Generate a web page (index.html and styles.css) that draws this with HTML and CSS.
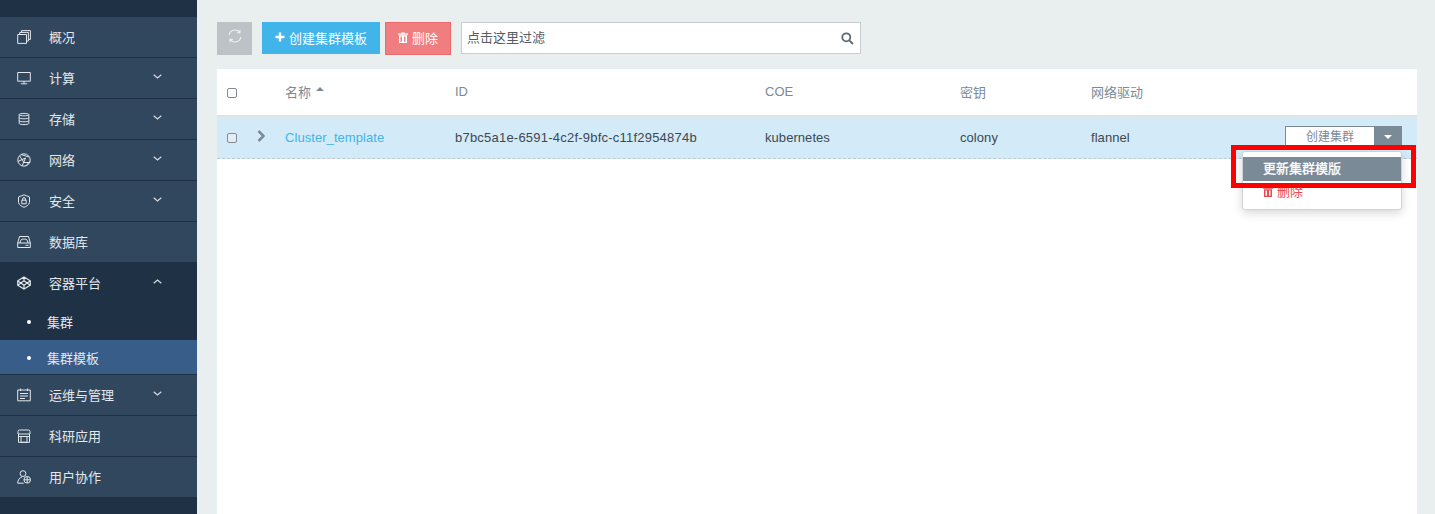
FILE: index.html
```html
<!DOCTYPE html>
<html lang="zh-CN">
<head>
<meta charset="utf-8">
<title>集群模板</title>
<link rel="stylesheet" href="styles.css">
</head>
<body>
<div class="app">
  <nav class="sidebar">
    <a class="nav-item"><svg class="nav-icon" viewBox="0 0 14 14"><path d="M4.500 3V.6h8.900v8.800H11M2.700 4.500V2.400h8.700v8.700H9.500M.7 4.500h8.800v8.900H.7z"/></svg><span class="nav-label">概况</span></a>
    <a class="nav-item"><svg class="nav-icon" viewBox="0 0 14 14"><path d="M.7 1.500h12.600v8.700H.7zM7 10.200v2.600M3.800 12.800h6.400"/></svg><span class="nav-label">计算</span><svg class="chev" viewBox="0 0 9 5"><path d="M.7.7 4.500 4 8.300.7"/></svg></a>
    <a class="nav-item"><svg class="nav-icon" viewBox="0 0 14 14"><path d="M2.200 2.600C2.200 1 11.800 1 11.800 2.600v8.800C11.800 13 2.200 13 2.200 11.400zM2.200 2.600C2.200 4.200 11.800 4.200 11.800 2.600M2.200 5.600C2.200 7.200 11.800 7.200 11.800 5.600M2.200 8.600C2.200 10.200 11.800 10.200 11.800 8.600"/></svg><span class="nav-label">存储</span><svg class="chev" viewBox="0 0 9 5"><path d="M.7.7 4.500 4 8.300.7"/></svg></a>
    <a class="nav-item"><svg class="nav-icon" viewBox="0 0 14 14"><circle cx="7" cy="7" r="6.200"/><path d="M2.500 2.800 7 9.500M.9 8.500 8.500 5M4 1.500 12 4M13 8.500 8.800 12.800M7 9.500h6M8.500 5 5 13"/></svg><span class="nav-label">网络</span><svg class="chev" viewBox="0 0 9 5"><path d="M.7.7 4.500 4 8.300.7"/></svg></a>
    <a class="nav-item"><svg class="nav-icon" viewBox="0 0 14 14"><path d="M7 .8 12.500 3v5.500C12 11 9 12.500 7 13.300 5 12.500 2 11 1.500 8.500V3zM4.800 6.200h4.400v3.600H4.800zM5.600 6.200V5a1.400 1.400 0 0 1 2.800 0v1.200"/></svg><span class="nav-label">安全</span><svg class="chev" viewBox="0 0 9 5"><path d="M.7.7 4.500 4 8.300.7"/></svg></a>
    <a class="nav-item"><svg class="nav-icon" viewBox="0 0 14 14"><path d="M2.500 1.500h9l1.800 6.500v4.500H.7V8zM.7 8h12.600M3 8c.5-3 1-4 4-4s3.500 1 4 4M8.500 10.300h3"/></svg><span class="nav-label">数据库</span></a>
    <div class="nav-group">
      <a class="nav-item nav-item-open"><svg class="nav-icon nav-icon-bold" viewBox="0 0 14 14"><path d="M7 1 13.300 4.800v4.400L7 13 .7 9.200V4.800zM7 4.800 10.200 7 7 9.200 3.800 7zM7 1v3.800M7 9.200V13M.7 4.800 3.800 7 .7 9.200M13.300 4.800 10.200 7l3.100 2.200"/></svg><span class="nav-label">容器平台</span><svg class="chev" viewBox="0 0 9 5"><path d="M.7 4.300 4.500 1l3.800 3.300"/></svg></a>
      <a class="sub-item"><span class="dot"></span>集群</a>
      <a class="sub-item sub-item-active"><span class="dot"></span>集群模板</a>
    </div>
    <a class="nav-item"><svg class="nav-icon" viewBox="0 0 14 14"><path d="M3.500.5v2.500M10.500.5v2.500M.7 2h12.600v10.800H.7zM3 5.500h8M3 8h8M3 10.500h5"/></svg><span class="nav-label">运维与管理</span><svg class="chev" viewBox="0 0 9 5"><path d="M.7.7 4.500 4 8.300.7"/></svg></a>
    <a class="nav-item"><svg class="nav-icon" viewBox="0 0 14 14"><path d="M1 5V2.500Q1 1 2.500 1h9Q13 1 13 2.500V5zM1.500 5v8.300h11V5M4 7.500h6v5.800H4zM1.500 7.500h11"/></svg><span class="nav-label">科研应用</span></a>
    <a class="nav-item"><svg class="nav-icon" viewBox="0 0 14 14"><circle cx="6" cy="3.600" r="2.900"/><path d="M5 7C2.500 7.500.7 10 .7 13.200h6"/><circle cx="10.200" cy="9.800" r="3.300"/><path d="M10.200 6.500v6.600M6.900 9.800h6.600"/></svg><span class="nav-label">用户协作</span></a>
  </nav>
  <main class="main">
    <div class="toolbar">
      <button class="btn btn-refresh" type="button"><svg class="refresh" viewBox="0 0 14 14"><path d="M1.200 6A5.800 5.800 0 0 1 11.500 3.200M12.800 8A5.800 5.800 0 0 1 2.500 10.800M12 .8v3H9M2 13.200v-3h3"/></svg></button>
      <button class="btn btn-create" type="button"><svg class="plus" viewBox="0 0 10 10"><path d="M5 .5v9M.5 5h9"/></svg>创建集群模板</button>
      <button class="btn btn-delete" type="button"><svg class="trash" viewBox="0 0 10 11"><path d="M3.200 1.600V.4h3.600v1.200H10v1.100H0V1.600zM1 3.300h8V11H1zM2.500 4.500v5.200h1.500V4.500zm3.500 0v5.200h1.500V4.500z" fill-rule="evenodd"/></svg>删除</button>
      <div class="filter"><span class="filter-text">点击这里过滤</span><svg class="search" viewBox="0 0 13 13"><circle cx="5.300" cy="5.300" r="4"/><path d="m8.300 8.300 3.700 3.700"/></svg></div>
    </div>
    <section class="panel">
      <div class="row row-head">
        <span class="cell-check"><span class="check"></span></span>
        <span class="cell-expand"></span>
        <span class="cell-name">名称<i class="sort"></i></span>
        <span class="cell-id">ID</span>
        <span class="cell-coe">COE</span>
        <span class="cell-key">密钥</span>
        <span class="cell-net">网络驱动</span>
      </div>
      <div class="row row-body">
        <span class="cell-check"><span class="check"></span></span>
        <span class="cell-expand"><svg class="expand" viewBox="0 0 8 12"><path d="M1.500 1 6.500 6l-5 5"/></svg></span>
        <span class="cell-name link">Cluster_template</span>
        <span class="cell-id">b7bc5a1e-6591-4c2f-9bfc-c11f2954874b</span>
        <span class="cell-coe">kubernetes</span>
        <span class="cell-key">colony</span>
        <span class="cell-net">flannel</span>
        <span class="cell-action">
          <span class="split"><span class="split-main">创建集群</span><span class="split-caret"><i></i></span></span>
          <span class="menu">
            <span class="menu-item menu-active">更新集群模版</span>
            <span class="menu-item menu-danger"><svg class="trash-sm" viewBox="0 0 10 11"><path d="M3.200 1.600V.4h3.600v1.200H10v1.100H0V1.600zM1 3.300h8V11H1zM2.500 4.500v5.200h1.500V4.500zm3.500 0v5.200h1.500V4.500z" fill-rule="evenodd"/></svg>删除</span>
          </span>
        </span>
      </div>
    </section>
  </main>
</div>
<div class="highlight"></div>
</body>
</html>
```

FILE: styles.css
```css
* { box-sizing: border-box; }
html, body { margin: 0; height: 100%; overflow: hidden; }
body {
  font-family: "Liberation Sans", "Noto Sans CJK SC", sans-serif;
  font-size: 13px;
  color: #3d4852;
  background: #e9efef;
}
.app { display: flex; height: 514px; }

/* sidebar */
.sidebar {
  width: 197px;
  flex: none;
  background: #1f3245;
  padding-top: 17px;
  color: #e4e8ec;
}
.nav-item {
  display: flex;
  align-items: center;
  height: 41px;
  padding-left: 17px;
  background: #30475e;
  border-bottom: 1px solid #1f3245;
}
.nav-icon {
  width: 14px;
  height: 14px;
  flex: none;
  margin-top: -1px;
  fill: none;
  stroke: #e4e8ec;
  stroke-width: 1;
}
.nav-icon-bold { stroke-width: 1.200; }
.nav-label { margin-left: 18px; width: 104px; line-height: 40px; padding-top: 1px; }
.chev {
  width: 9px;
  height: 5px;
  margin-top: -3px;
  fill: none;
  stroke: #d5dbe1;
  stroke-width: 1.200;
}
.nav-group { background: #1f3245; }
.nav-item-open { background: #1f3245; border-bottom: 0; height: 40px; }
.sub-item {
  display: flex;
  align-items: center;
  height: 37px;
  padding-left: 27px;
}
.sub-item-active {
  height: 34px;
  background: #385d88;
}
.dot {
  width: 4px;
  height: 4px;
  border-radius: 50%;
  background: #fff;
  margin: 1px 16px 0 0;
}
.nav-group + .nav-item { border-top: 1px solid #1f3245; height: 42px; }

/* main */
.main { flex: 1; padding: 22px 18px 0 20px; display: flex; flex-direction: column; min-width: 0; }
.toolbar { display: flex; align-items: flex-start; height: 47px; }
.btn {
  height: 33px;
  border: 0;
  margin: 0 5px 0 0;
  padding: 0 0 2px;
  font: inherit;
  color: #fff;
  display: flex;
  align-items: center;
  justify-content: center;
}
.btn-refresh { width: 35px; background: #bcc2c5; margin-right: 10px; }
.refresh { width: 14px; height: 14px; margin-top: -3px; fill: none; stroke: #eef1f2; stroke-width: 1.100; }
.btn-create { width: 118px; height: 32px; background: #41b4ea; }
.plus { width: 10px; height: 10px; margin-right: 4px; fill: none; stroke: #fff; stroke-width: 2.400; }
.btn-delete { width: 66px; background: #f07d80; border: 1px solid #ea6a6e; margin-right: 10px; }
.trash { width: 10px; height: 11px; margin-right: 4px; fill: #fff; }
.filter {
  width: 400px;
  height: 32px;
  background: #fff;
  border: 1px solid #c9cccd;
  display: flex;
  align-items: center;
  justify-content: space-between;
  padding: 0 6px 0 5px;
  color: #555c63;
}
.filter-text { margin-top: -4px; }
.search { width: 13px; height: 13px; fill: none; stroke: #5f676e; stroke-width: 1.800; }

/* table */
.panel { flex: 1; background: #fff; }
.row { display: flex; align-items: center; }
.row-head {
  height: 48px;
  border-bottom: 2px solid #dfe3e6;
  color: #7b8a97;
  padding-bottom: 2px;
}
.row-body {
  height: 42px;
  padding-bottom: 1px;
  background: #d3ebf8;
  border-bottom: 1px dashed #c2c9ce;
  position: relative;
  letter-spacing: .06px;
}
.cell-check { width: 38px; padding-left: 10px; display: flex; }
.cell-expand { width: 30px; display: flex; }
.cell-name { width: 170px; }
.cell-id { width: 310px; }
.row-body .cell-id { letter-spacing: .22px; }
.cell-coe { width: 195px; }
.cell-key { width: 131px; }
.cell-net { width: 194px; }
.cell-action { width: 117px; position: relative; letter-spacing: 0; }
.row-body .cell-check { margin-top: 2px; }
.row-head .cell-check { margin-top: 4px; }
.check {
  width: 10px;
  height: 10px;
  border: 1px solid #7f8a94;
  border-radius: 2px;
  background: #fff;
}
.row-body .check { background: #e6eef3; }
.sort {
  display: inline-block;
  width: 0;
  height: 0;
  margin: 0 0 8px 5px;
  vertical-align: middle;
  border: 4px solid transparent;
  border-top: 0;
  border-bottom: 4px solid #7b8a97;
}
.expand { width: 8px; height: 12px; margin: 0 0 2px 2px; fill: none; stroke: #7b8a97; stroke-width: 2.500; }
.link { color: #41b4ea; }
.split { display: flex; height: 22px; width: 117px; }
.split-main {
  width: 89px;
  background: #fff;
  border: 1px solid #7b8a97;
  border-right: 0;
  font-size: 12px;
  color: #7b8a97;
  text-align: center;
  line-height: 20px;
}
.split-caret { width: 28px; background: #7b8a97; display: flex; align-items: center; justify-content: center; }
.split-caret i { border: 4px solid transparent; border-top: 4px solid #fff; border-bottom: 0; }
.menu {
  position: absolute;
  right: 0;
  top: 25px;
  width: 160px;
  height: 59px;
  padding-top: 5px;
  background: #fff;
  border: 1px solid #cfd3d6;
  border-radius: 3px;
  box-shadow: 0 3px 10px rgba(0, 0, 0, .16);
  z-index: 2;
}
.menu-item { display: block; height: 24px; line-height: 24px; padding-left: 20px; }
.menu-active { background: #7b8a97; color: #fff; -webkit-text-stroke: .3px #fff; }
.menu-danger { color: #ea4b52; line-height: 22px; }
.trash-sm { width: 10px; height: 11px; margin-right: 4px; fill: #ea4b52; vertical-align: -1px; }

/* annotation drawn over the screenshot */
.highlight {
  position: absolute;
  left: 1231px;
  top: 145px;
  width: 185px;
  height: 43px;
  border: 5px solid #f00;
  z-index: 3;
}
```
